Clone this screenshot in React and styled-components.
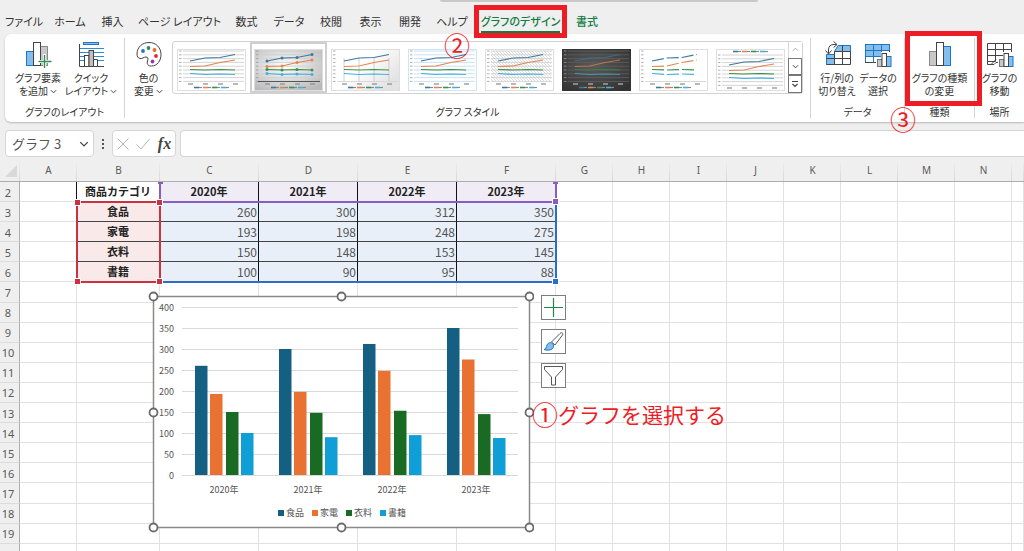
import React from "react";
import styled, { createGlobalStyle, css } from "styled-components";

const INK = "#333333";
const GREEN = "#107c41";
const RED = "#ee1c25";

const GlobalStyle = createGlobalStyle`
  * { box-sizing: border-box; }
  body {
    margin: 0;
    background: #efefef;
    color: ${INK};
    font-family: "Noto Sans CJK JP", "Noto Sans", sans-serif;
    font-size: 11px;
    overflow: hidden;
  }
  button, input, select { font: inherit; color: inherit; }
`;

const Window = styled.div`
  display: flex;
  flex-direction: column;
  height: 100vh;
  overflow: hidden;
  position: relative;
`;

const SearchEdge = styled.div`
  position: absolute;
  top: 0;
  left: 43%;
  width: 31%;
  height: 2px;
  border-radius: 0 0 4px 4px;
  background: #c9c9c9;
`;

const TabBar = styled.nav`
  display: flex;
  flex: none;
  height: 34px;
  position: relative;
  z-index: 2;
`;

const Tab = styled.button`
  position: relative;
  flex: none;
  width: ${(p) => p.$width}px;
  padding: 8px 0 0;
  border: 0;
  background: none;
  white-space: nowrap;
  font-feature-settings: "palt";
  color: ${(p) => (p.$contextual ? GREEN : INK)};
  font-weight: ${(p) => (p.$contextual ? 500 : 400)};
`;

const TabText = styled.span`
  display: block;
  width: max-content;
  margin: 0 auto;
  height: 24px;
  line-height: 24px;
  border-bottom: 2px solid ${(p) => (p.$active ? GREEN : "transparent")};
`;

const Frame = styled.span`
  position: absolute;
  top: ${(p) => p.$top}px;
  bottom: ${(p) => p.$bottom}px;
  left: 0;
  right: ${(p) => p.$right || 0}px;
  border: 5px solid ${RED};
  pointer-events: none;
`;

const Step = styled.span`
  position: absolute;
  left: ${(p) => p.$left}px;
  top: ${(p) => p.$top}px;
  color: ${RED};
  font-size: 26px;
  font-weight: 400;
  line-height: 26px;
  pointer-events: none;
`;

const Ribbon = styled.section`
  display: flex;
  flex: none;
  height: 88px;
  margin-left: 5px;
  padding: 4px 0;
  background: #fff;
  border-radius: 6px 0 0 6px;
  box-shadow: 0 1px 2px #b8b8b8;
  position: relative;
  z-index: 1;
`;

const Group = styled.section`
  position: relative;
  display: flex;
  flex-direction: column;
  justify-content: space-between;
  flex: ${(p) => (p.$width ? "none" : "1")};
  min-width: 0;
  width: ${(p) => (p.$width ? p.$width + "px" : "auto")};
  border-right: ${(p) => (p.$last ? "0" : "1px solid #d4d4d4")};
`;

const GroupItems = styled.div`
  display: flex;
  justify-content: center;
  padding-top: 3px;
`;

const GroupLabel = styled.div`
  text-align: center;
  line-height: 12px;
  font-size: 10px;
  font-feature-settings: "palt";
  white-space: nowrap;
`;

const Command = styled.button`
  display: flex;
  flex-direction: column;
  align-items: center;
  flex: none;
  width: ${(p) => p.$width}px;
  padding: 0;
  border: 0;
  background: none;
  font-size: 10px;
  line-height: 13px;
  font-feature-settings: "palt";
  white-space: nowrap;
  svg.icon { display: block; margin-bottom: 2px; }
`;

const Gallery = styled.div`
  display: flex;
  flex: 1;
  min-width: 0;
  height: 53px;
  margin: 0 7px 0 0;
  border: 1px solid #d2d2d2;
  border-radius: 3px;
`;

const Styles = styled.div`
  display: flex;
  flex: 1;
  overflow: hidden;
`;

const StyleButton = styled.button`
  flex: none;
  width: 77px;
  height: 51px;
  padding: 4px 0 0 4px;
  border: 0;
  background: none;
  ${(p) => p.$selected && css`box-shadow: inset 0 0 0 2px #cfcfcf;`}
  svg { display: block; }
`;

const Scroller = styled.div`
  display: flex;
  flex-direction: column;
  width: 14px;
`;

const ScrollButton = styled.button`
  flex: 1;
  display: flex;
  align-items: center;
  justify-content: center;
  padding: 0;
  background: #fff;
  border: 1px solid ${(p) => (p.$dim ? "#d8d8d8" : "#777")};
  border-width: ${(p) => (p.$dim ? "0 0 0 1px" : "1px")};
`;

const FormulaRow = styled.div`
  display: flex;
  flex: none;
  height: 35px;
  padding: 8px 0 0 5px;
`;

const Box = styled.div`
  display: flex;
  align-items: center;
  height: 27px;
  background: #fff;
  border: 1px solid #d6d6d6;
  border-radius: 4px;
`;

const NameBox = styled(Box)`
  position: relative;
  width: 89px;
  svg { position: absolute; right: 4px; pointer-events: none; }
`;

const NameSelect = styled.select`
  appearance: none;
  width: 100%;
  height: 100%;
  padding: 0 0 0 6px;
  border: 0;
  background: none;
  color: #555;
  font-size: 13px;
`;

const Dots = styled.span`
  display: flex;
  flex-direction: column;
  align-items: center;
  justify-content: center;
  gap: 2px;
  width: 18px;
  height: 27px;
  i { width: 2px; height: 2px; background: #555; }
`;

const FormulaTools = styled(Box)`
  width: 64px;
  margin-right: 4px;
  justify-content: space-around;
`;

const ToolButton = styled.button`
  display: flex;
  align-items: center;
  padding: 0;
  border: 0;
  background: none;
  color: #444;
  font: italic bold 16px/20px "Liberation Serif", serif;
`;

const FormulaInput = styled.input`
  flex: 1;
  min-width: 0;
  height: 27px;
  border: 1px solid #d6d6d6;
  border-right: 0;
  border-radius: 4px 0 0 4px;
  background: #fff;
`;

const Sheet = styled.main`
  position: relative;
  flex: 1;
  overflow: hidden;
  background: #fff;
`;

const Grid = styled.table`
  table-layout: fixed;
  width: 100%;
  height: 407px;
  border-collapse: separate;
  border-spacing: 0;
`;

const ColHead = styled.th`
  height: 25px;
  padding: 1px 0 0;
  background: linear-gradient(#efefef, #d4d4d4) right 3px / 1px 100% no-repeat, #efefef;
  border-bottom: 1px solid #adadad;
  font: 10px/20px "Noto Sans", sans-serif;
  color: #5a5a5a;
  svg { display: block; margin: 2px 0 0 5px; }
`;

const RowHead = styled.th`
  height: 20px;
  padding: 2px 3px 0 0;
  background: #efefef;
  border-right: 1px solid #adadad;
  border-bottom: 1px solid #dcdcdc;
  font: 11px/14px "Noto Sans", sans-serif;
  color: #5a5a5a;
`;

const tones = {
  none: ["#fff", "#e1e1e1", "#e1e1e1"],
  edge: ["#fff", "#111", "#e1e1e1"],
  title: ["#fff", "#e1e1e1", "#e1e1e1"],
  series: ["#f0ecf5", "#111", "#8e6bbf"],
  category: ["#f9e9e9", "#c9323e", "#444"],
  value: ["#e9eff8", "#111", "#444"],
};

const Cell = styled.td`
  height: 20px;
  padding: 0 1px 1px;
  line-height: 17px;
  overflow: hidden;
  white-space: nowrap;
  background: ${(p) => tones[p.$tone][0]};
  border-right: 1px solid ${(p) => tones[p.$tone][1]};
  border-bottom: 1px solid ${(p) => tones[p.$tone][2]};
  text-align: ${(p) => (p.$tone === "value" ? "right" : "center")};
  font-size: ${(p) => (p.$tone === "value" ? 12 : 11)}px;
  font-weight: ${(p) => (p.$tone === "value" ? 400 : 700)};
  color: ${(p) => (p.$tone === "value" ? "#555" : "#222")};
`;

const Range = styled.div`
  position: absolute;
  left: ${(p) => p.$x}px;
  top: ${(p) => p.$y}px;
  width: ${(p) => p.$w}px;
  height: ${(p) => p.$h}px;
  border: 2px solid ${(p) => p.$color};
  border-width: ${(p) => p.$sides || "2px"};
  pointer-events: none;
`;

const Handle = styled.i`
  position: absolute;
  width: 5px;
  height: ${(p) => (p.$v === "cut" ? 2 : 5)}px;
  background: ${(p) => p.$color};
  ${(p) => p.$v !== "cut" && "box-shadow: 0 0 0 1px #fff;"}
  ${(p) => ({ top: "top: -3px;", bottom: "bottom: -3px;", cut: "top: 0;" })[p.$v]}
  ${(p) => (p.$h === "left" ? "left: -3px;" : "right: -3px;")}
`;

const ChartObject = styled.figure`
  position: absolute;
  left: 148px;
  top: 134px;
  margin: 0;
  svg { display: block; }
`;

const ChartButtons = styled.div`
  position: absolute;
  left: 541px;
  top: 138px;
  display: flex;
  flex-direction: column;
  gap: 9px;
`;

const ChartButton = styled.button`
  display: flex;
  align-items: center;
  justify-content: center;
  width: 25px;
  height: 25px;
  padding: 0;
  border: 1px solid #7d7d7d;
  background: #fff;
`;

const Instruction = styled.p`
  position: absolute;
  left: 532px;
  top: 242px;
  margin: 0;
  display: flex;
  align-items: center;
  color: ${RED};
  font-size: 21px;
  line-height: 30px;
  white-space: nowrap;
  b { font-size: 26px; font-weight: 400; }
`;

const Chevron = ({ size = 7, up, color = "#444" }) => (
  <svg width={size} height={size} viewBox="0 0 8 8" fill="none" stroke={color} strokeWidth="1.1">
    <path d={up ? "M1 5.5 4 2.5 7 5.5" : "M1 2.5 4 5.5 7 2.5"} />
  </svg>
);

const Icon = ({ children }) => (
  <svg className="icon" width="28" height="28" viewBox="0 0 28 28" fill="none" stroke="#444" strokeWidth="1">
    {children}
  </svg>
);

const AddElementIcon = () => (
  <Icon>
    <rect x="2.500" y="10.500" width="7" height="14" fill="#83beec" stroke="#1f77c4" />
    <rect x="16.500" y="5.500" width="7" height="19" fill="#c8c8c8" stroke="#8a8a8a" />
    <rect x="9.500" y="1.500" width="7" height="23" fill="#fff" />
    <path d="M13 20.500h15M20.500 13v15" stroke="#fff" strokeWidth="3" />
    <path d="M14.500 20.500h13M20.500 14v13" stroke="#2f8f50" strokeWidth="1.400" />
  </Icon>
);

const QuickLayoutIcon = () => (
  <Icon>
    <rect x="6.500" y="1.500" width="15" height="2" fill="#83beec" stroke="#1f77c4" />
    <path d="M3 7.500h24M3 11.500h24M3 15.500h24M3 19.500h24" stroke="#2a8ad0" />
    <path d="M2.500 3v22.500H27" />
    <rect x="7.500" y="14.500" width="4.500" height="11" fill="#fff" />
    <rect x="12" y="9.500" width="4.500" height="16" fill="#c0c0c0" />
    <path d="M16.500 18.500h4v7h-4z" fill="#fff" />
  </Icon>
);

const PaletteIcon = () => (
  <Icon>
    <path d="M2 13C2 6 7.500 1.500 14 1.500c7 0 12 5 12 12 0 6.500-4 11.500-9.500 11.500-3.500 0-5-2-4-5 1-2.500.5-4-1.500-4-2.500 0-3.500 2-6 1.500C3 17 2 15.500 2 13Z" />
    <g stroke="none">
      <circle cx="8" cy="10" r="1.900" fill="#1f77c4" />
      <circle cx="13.500" cy="7" r="1.900" fill="#2f8f50" />
      <circle cx="19.500" cy="9" r="1.900" fill="#ee6a20" />
      <circle cx="21" cy="15" r="1.900" fill="#e5282f" />
      <circle cx="17.500" cy="20.500" r="1.900" fill="#8b3fb5" />
    </g>
  </Icon>
);

const SwitchIcon = () => (
  <Icon>
    <path d="M3.500 14v10h24V4.500H13" fill="#fff" stroke="none" />
    <path d="M3.500 13.500h8v10h-8zM15 4.500h12.500v6h-16z" fill="#83beec" stroke="#1f77c4" />
    <path d="M11.500 10.500v13M19.500 4.500v19M27.500 10.500v13h-24M3.500 17.500h24M11.500 10.500h16" />
    <path d="M5.500 12.500V9q0-5.500 5.500-5.500h2.500M10.500.5l3.500 3-3.500 3M2.500 9.500l3 3.500 3-3.500" />
  </Icon>
);

const MiniBars = () => (
  <g>
    <path d="M12 17h5v-6h11v16H12z" fill="#fff" stroke="none" />
    <rect x="13.500" y="18.500" width="4.500" height="7" fill="#c8c8c8" stroke="#777" />
    <rect x="22.500" y="15.500" width="4.500" height="10" fill="#83beec" stroke="#1f77c4" />
    <rect x="18" y="12.500" width="4.500" height="13" fill="#fff" />
  </g>
);

const SelectDataIcon = () => (
  <Icon>
    <rect x="1.500" y="3.500" width="24" height="18" fill="#fff" />
    <path d="M1.500 3.500h24v6h-8v6h-16z" fill="#83beec" stroke="#1f77c4" />
    <path d="M1.500 21.500v-6M9.500 3.500v18M17.500 3.500v18M1.500 9.500h24M1.500 15.500h24" stroke="#1f77c4" />
    <MiniBars />
  </Icon>
);

const ChangeTypeIcon = () => (
  <Icon>
    <rect x="3.500" y="10.500" width="7" height="14" fill="#c8c8c8" stroke="#8a8a8a" />
    <rect x="17.500" y="5.500" width="7" height="19" fill="#83beec" stroke="#1f77c4" />
    <rect x="10.500" y="1.500" width="7" height="23" fill="#fff" />
  </Icon>
);

const MoveChartIcon = () => (
  <Icon>
    <path d="M1.500 2.500h24v19H10l-2 2H1.500z" fill="#fff" />
    <path d="M9.500 2.500v18M17.500 2.500v18M1.500 8.500h24M1.500 14.500h24M1.500 20.500h8M5 23.500l5-5" />
    <MiniBars />
  </Icon>
);

const THUMB_LINES = [
  ["#3c78a0", [12, 9, 8.5, 5.5]],
  ["#e8834f", [17.5, 17, 13.5, 11]],
  ["#3a8f4a", [20.5, 21, 20.5, 21]],
  ["#45b0e6", [24.5, 25.5, 25, 25.5]],
];
const THUMB_X = [13, 28, 43, 58];

function StyleThumb({ kind }) {
  const dark = kind === "dark";
  const shift = kind === "topLegend" ? 4 : 0;
  const gridColor = { dark: "#5c5c5c", blue: "#c3dcf2", plain: "none", drop: "none" }[kind] || "#cfcfcf";
  const bg = { dark: "url(#thumbDark)", markers: "url(#thumbSilver)", drop: "url(#thumbPale)" }[kind] || "#fff";
  const stroke = { dark: "#333", blue: "#cfe3f5" }[kind] || "#dedede";
  const legendY = kind === "topLegend" ? 2.5 : 38.5;
  const labelY = kind === "topLegend" ? 39 : 35;
  return (
    <svg width="69" height="42" viewBox="0 0 69 42" aria-hidden="true">
      <defs>
        <radialGradient id="thumbSilver" cx=".45" cy=".4" r=".7">
          <stop offset="0" stopColor="#fff" /><stop offset="1" stopColor="#b9b9b9" />
        </radialGradient>
        <radialGradient id="thumbDark" cx=".45" cy=".4" r=".7">
          <stop offset="0" stopColor="#5a5a5a" /><stop offset="1" stopColor="#333" />
        </radialGradient>
        <linearGradient id="thumbPale" x2="1" y2=".6">
          <stop offset=".5" stopColor="#fff" /><stop offset="1" stopColor="#e3e3e3" />
        </linearGradient>
        <pattern id="thumbHatch" width="3" height="3" patternUnits="userSpaceOnUse">
          <path d="M0 0 3 3" stroke="#cfcfcf" strokeWidth=".7" />
        </pattern>
      </defs>
      <rect x=".5" y=".5" width="68" height="41" fill={bg} stroke={stroke} />
      {kind === "hatch" && <rect x="6" y="2" width="60" height="30" fill="url(#thumbHatch)" />}
      {Array.from({ length: 9 }, (_, i) => (
        <g key={i}>
          <path d={`M6 ${2 + shift + i * 3.8}H67`} stroke={gridColor} strokeWidth=".9" />
          <path d={`M2 ${2 + shift + i * 3.8}h2.500`} stroke="#999" strokeWidth=".8" />
        </g>
      ))}
      {kind === "markers" && <path d="M4 32.500h62" stroke="#555" />}
      {kind === "drop" && THUMB_X.map((x) => <path key={x} d={`M${x} 9v23`} stroke="#c4c4c4" strokeWidth=".8" />)}
      {(kind === "plain" || kind === "drop") && <path d="M6 32.500h61" stroke="#d8d8d8" />}
      {THUMB_LINES.map(([color, ys], n) => (
        <g key={color}>
          <polyline
            fill="none" stroke={color} strokeWidth="1.200" opacity={dark ? 0.7 : 1}
            points={ys.map((y, i) => `${THUMB_X[i]},${y + shift}`).join(" ")}
            strokeDasharray={kind === "plain" ? "12 3" : undefined}
          />
          {kind === "markers" && ys.map((y, i) => <circle key={i} cx={THUMB_X[i]} cy={y} r="1.500" fill={color} />)}
          <path d={`M${17 + n * 9} ${legendY}h5`} stroke={color} strokeWidth="1.600" />
          <path d={`M${22 + n * 9} ${legendY}h3`} stroke="#8a8a8a" strokeWidth="1.200" />
          <path d={`M${THUMB_X[n] - 2} ${labelY}h5`} stroke={dark ? "#bbb" : "#8a8a8a"} strokeWidth="1.200" />
        </g>
      ))}
    </svg>
  );
}

const TABS = [
  ["ファイル", 48], ["ホーム", 44], ["挿入", 41], ["ページ レイアウト", 93], ["数式", 41], ["データ", 44],
  ["校閲", 40], ["表示", 39], ["開発", 40], ["ヘルプ", 44], ["グラフのデザイン", 93], ["書式", 40],
];
const THUMBS = ["grid", "markers", "drop", "blue", "hatch", "dark", "plain", "topLegend"];
const COLUMNS = [
  ["A", 57], ["B", 83], ["C", 99], ["D", 99], ["E", 99], ["F", 99], ["G", 57], ["H", 57],
  ["I", 57], ["J", 57], ["K", 57], ["L", 57], ["M", 57], ["N", 57], ["", 0],
];
const YEARS = ["2020年", "2021年", "2022年", "2023年"];
const SERIES = [
  ["食品", "#156082", [260, 300, 312, 350]],
  ["家電", "#e97132", [193, 198, 248, 275]],
  ["衣料", "#196b24", [150, 148, 153, 145]],
  ["書籍", "#0f9ed5", [100, 90, 95, 88]],
];
const SHEET_ROWS = {
  2: ["", "商品カテゴリ", ...YEARS],
  ...Object.fromEntries(SERIES.map(([name, , values], i) => [i + 3, ["", name, ...values]])),
};
const LAST_NUMBERED_ROW = 19;

function toneOf(row, col) {
  if (row > 6 || col > 5) return "none";
  if (col === 0) return row === 2 ? "edge" : "none";
  if (row === 2) return col === 1 ? "title" : "series";
  return col === 1 ? "category" : "value";
}

function BarChart() {
  const x0 = 34;
  const base = 184;
  return (
    <svg width="386" height="242" viewBox="0 0 386 242" fontFamily="'Noto Sans CJK JP', sans-serif" fontSize="9" fill="#555">
      <rect x="5.500" y="5.500" width="376" height="231" fill="#fff" stroke="#8a8a8a" strokeWidth="1.500" />
      {Array.from({ length: 9 }, (_, i) => (
        <g key={i}>
          <path d={`M${x0} ${base + 0.5 - i * 21}h336`} stroke="#d9d9d9" />
          <text x="26" y={base + 4 - i * 21} textAnchor="end">{i * 50}</text>
        </g>
      ))}
      {YEARS.map((year, c) => (
        <g key={year}>
          {SERIES.map(([name, color, values], s) => (
            <rect key={name} x={x0 + 13 + c * 84 + Math.round(s * 15.4)} y={base - values[c] * 0.42} width="12.500" height={values[c] * 0.42} fill={color} />
          ))}
          <text x={x0 + 42 + c * 84} y="202" textAnchor="middle">{year}</text>
        </g>
      ))}
      {SERIES.map(([name, color], i) => (
        <g key={name}>
          <rect x={130 + i * 34} y="219" width="6" height="6" fill={color} />
          <text x={138 + i * 34} y="225">{name}</text>
        </g>
      ))}
      {[[5, 5], [193, 5], [381, 5], [5, 121], [381, 121], [5, 236], [193, 236], [381, 236]].map(([x, y]) => (
        <circle key={`${x}-${y}`} cx={x + 0.5} cy={y + 0.5} r="4" fill="#fff" stroke="#6b6b6b" strokeWidth="1.800" />
      ))}
    </svg>
  );
}

export default function App() {
  return (
    <Window>
      <GlobalStyle />
      <SearchEdge />
      <TabBar>
        {TABS.map(([label, width]) => {
          const active = label === "グラフのデザイン";
          return (
            <Tab key={label} $width={width} $contextual={active || label === "書式"}>
              <TabText $active={active}>{label}</TabText>
              {active && <Frame $top={5} $bottom={-4} />}
              {active && <Step $left={-30} $top={32}>②</Step>}
            </Tab>
          );
        })}
      </TabBar>

      <Ribbon>
        <Group $width={120}>
          <GroupItems>
            <Command $width={53}><AddElementIcon /><span>グラフ要素</span><span>を追加 <Chevron /></span></Command>
            <Command $width={53}><QuickLayoutIcon /><span>クイック</span><span>レイアウト <Chevron /></span></Command>
          </GroupItems>
          <GroupLabel>グラフのレイアウト</GroupLabel>
        </Group>
        <Group>
          <GroupItems>
            <Command $width={47}><PaletteIcon /><span>色の</span><span>変更 <Chevron /></span></Command>
            <Gallery>
              <Styles>
                {THUMBS.map((kind, i) => (
                  <StyleButton key={kind} $selected={i === 1} aria-label={`スタイル ${i + 1}`}><StyleThumb kind={kind} /></StyleButton>
                ))}
              </Styles>
              <Scroller>
                <ScrollButton $dim aria-label="上へ"><Chevron up color="#aaa" /></ScrollButton>
                <ScrollButton aria-label="下へ"><Chevron /></ScrollButton>
                <ScrollButton aria-label="その他">
                  <svg width="8" height="8" viewBox="0 0 8 8" fill="none" stroke="#444" strokeWidth="1.200"><path d="M1 1.500h6M1.500 4 4 6.500 6.500 4" /></svg>
                </ScrollButton>
              </Scroller>
            </Gallery>
          </GroupItems>
          <GroupLabel>グラフ スタイル</GroupLabel>
        </Group>
        <Group $width={94}>
          <GroupItems>
            <Command $width={41}><SwitchIcon /><span>行/列の</span><span>切り替え</span></Command>
            <Command $width={41}><SelectDataIcon /><span>データの</span><span>選択</span></Command>
          </GroupItems>
          <GroupLabel>データ</GroupLabel>
        </Group>
        <Group $width={70}>
          <GroupItems>
            <Command $width={69}><ChangeTypeIcon /><span>グラフの種類</span><span>の変更</span></Command>
          </GroupItems>
          <GroupLabel>種類</GroupLabel>
          <Frame $top={-7} $bottom={12} $right={-8} />
          <Step $left={-15} $top={68}>③</Step>
        </Group>
        <Group $width={49} $last>
          <GroupItems>
            <Command $width={49}><MoveChartIcon /><span>グラフの</span><span>移動</span></Command>
          </GroupItems>
          <GroupLabel>場所</GroupLabel>
        </Group>
      </Ribbon>

      <FormulaRow>
        <NameBox>
          <NameSelect aria-label="名前ボックス" defaultValue="グラフ 3"><option>グラフ 3</option></NameSelect>
          <Chevron size={10} />
        </NameBox>
        <Dots><i /><i /><i /></Dots>
        <FormulaTools>
          <ToolButton aria-label="キャンセル">
            <svg width="12" height="12" viewBox="0 0 12 12" stroke="#b5b5b5"><path d="M.5.5l11 11M11.500.5l-11 11" /></svg>
          </ToolButton>
          <ToolButton aria-label="入力">
            <svg width="14" height="12" viewBox="0 0 14 12" fill="none" stroke="#b5b5b5"><path d="M.5 6.500 5 11 13.500 1" /></svg>
          </ToolButton>
          <ToolButton>fx</ToolButton>
        </FormulaTools>
        <FormulaInput aria-label="数式バー" />
      </FormulaRow>

      <Sheet>
        <Grid>
          <colgroup>
            <col width="20" />
            {COLUMNS.map(([name, width]) => <col key={name} width={width || undefined} />)}
          </colgroup>
          <thead>
            <tr>
              <ColHead><svg width="12" height="12" viewBox="0 0 12 12"><path d="M12 0v12H0z" fill="#d9d9d9" /></svg></ColHead>
              {COLUMNS.map(([name]) => <ColHead key={name} scope="col">{name}</ColHead>)}
            </tr>
          </thead>
          <tbody>
            {Array.from({ length: 19 }, (_, i) => i + 2).map((row) => (
              <tr key={row}>
                <RowHead scope="row">{row <= LAST_NUMBERED_ROW && row}</RowHead>
                {COLUMNS.map(([name], col) => (
                  <Cell key={name} $tone={toneOf(row, col)}>{SHEET_ROWS[row]?.[col]}</Cell>
                ))}
              </tr>
            ))}
          </tbody>
        </Grid>

        <Range $x={159} $y={25} $w={398} $h={21} $color="#8a5cc0" $sides="0 2px 2px 2px">
          <Handle $v="cut" $h="left" $color="#8a5cc0" />
          <Handle $v="cut" $h="right" $color="#8a5cc0" />
        </Range>
        <Range $x={159} $y={45} $w={398} $h={81} $color="#2f6bcb" $sides="0 2px 2px 0">
          <Handle $v="top" $h="right" $color="#8a5cc0" />
          <Handle $v="bottom" $h="right" $color="#2f6bcb" />
        </Range>
        <Range $x={76} $y={44} $w={85} $h={82} $color="#c9323e">
          <Handle $v="top" $h="left" $color="#c9323e" />
          <Handle $v="top" $h="right" $color="#c9323e" />
          <Handle $v="bottom" $h="left" $color="#c9323e" />
          <Handle $v="bottom" $h="right" $color="#c9323e" />
        </Range>

        <ChartObject><BarChart /></ChartObject>

        <ChartButtons>
          <ChartButton aria-label="グラフ要素">
            <svg width="19" height="19" viewBox="0 0 19 19" stroke="#1f8a45" strokeWidth="1.200"><path d="M0 9.500h19M9.500 0v19" /></svg>
          </ChartButton>
          <ChartButton aria-label="グラフ スタイル">
            <svg width="21" height="21" viewBox="0 0 21 21" fill="none" stroke="#555">
              <path d="M8.500 11 17 2.500c1.500-1.500 3.500-.5 2.500 1.500L12 14Z" fill="#fff" />
              <path d="M1 18.500c2.500-.5 2-2 3-4.500 1-2.500 4-3 5.500-1.500s1.500 4-.5 5.500-5.500 1.500-8 .5Z" fill="#83beec" stroke="#1f77c4" />
            </svg>
          </ChartButton>
          <ChartButton aria-label="グラフ フィルター">
            <svg width="21" height="21" viewBox="0 0 21 21" fill="#fff" stroke="#555"><path d="M1.500 1.500h18v3L12.500 12v8h-4v-8l-7-7.500Z" /></svg>
          </ChartButton>
        </ChartButtons>

        <Instruction><b>①</b>グラフを選択する</Instruction>
      </Sheet>
    </Window>
  );
}
